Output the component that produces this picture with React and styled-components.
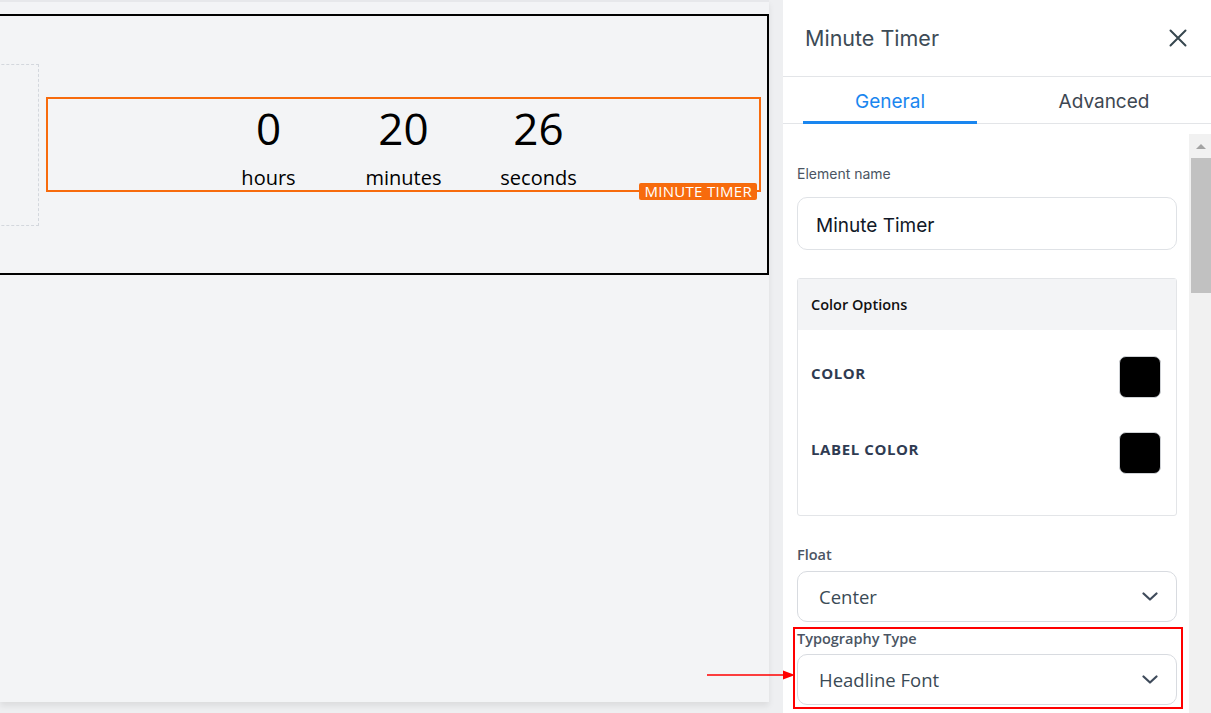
import React from "react";
import styled, { createGlobalStyle } from "styled-components";

const Global = createGlobalStyle`
  html, body { margin: 0; padding: 0; height: 100%; overflow: hidden; }
  body { font-family: "Open Sans", "Noto Sans", sans-serif; background: #eceef1; }
  #root { height: 100%; }
  * { box-sizing: border-box; }
`;

const Shell = styled.div`
  position: relative;
  display: flex;
  height: 713px;
  width: 1211px;
  box-shadow: inset 0 3px 2px -1px rgba(0, 0, 0, 0.07);
`;

const Workspace = styled.div`
  flex: 1;
  display: flex;
  padding: 0 14px 11px 0;
  background: #eeeff1;
`;

const Canvas = styled.div`
  flex: 1;
  background: #f3f4f6;
  padding-top: 14px;
  overflow: hidden;
  border-top: 2px solid #e7e8eb;
  box-shadow: 0 4px 6px rgba(0, 0, 0, 0.08);
`;

const Section = styled.div`
  margin-left: -60px;
  margin-top: -2px;
  height: 261px;
  border: 2px solid #000;
  display: flex;
  align-items: center;
  gap: 7px;
  padding-right: 6px;
`;

const Placeholder = styled.div`
  width: 97px;
  height: 162px;
  border: 1px dashed #d3d7dd;
`;

const TimerBox = styled.div`
  position: relative;
  flex: 1;
  height: 95px;
  border: 2px solid #f76b0d;
  display: flex;
  justify-content: center;
  padding-top: 3px;
`;

const Unit = styled.div`
  width: 135px;
  display: flex;
  flex-direction: column;
  align-items: center;
  color: #000;
`;

const Value = styled.div`
  font-size: 44px;
  line-height: 52px;
`;

const UnitLabel = styled.div`
  margin-top: 12px;
  font-size: 20px;
  line-height: 24px;
`;

const Badge = styled.div`
  position: absolute;
  right: 2px;
  bottom: -10px;
  height: 17px;
  padding: 0 5px;
  background: #f76b0d;
  color: #fff;
  font-size: 15px;
  letter-spacing: 0.3px;
  line-height: 17px;
  border-radius: 2px;
  white-space: nowrap;
`;

const Panel = styled.aside`
  width: 428px;
  background: #fff;
  display: flex;
  flex-direction: column;
`;

const Header = styled.div`
  height: 77px;
  border-bottom: 1px solid #e3e5e8;
  display: flex;
  align-items: center;
  justify-content: space-between;
  padding: 0 24px 0 22px;
`;

const Title = styled.h2`
  margin: 0;
  font-family: Inter, "Noto Sans", sans-serif;
  font-weight: 400;
  font-size: 21.5px;
  color: #3d4b56;
`;

const CloseButton = styled.button`
  border: 0;
  background: none;
  padding: 0;
  width: 18px;
  height: 18px;
  display: flex;
  color: #37474f;
  cursor: pointer;
`;

const Tabs = styled.div`
  display: flex;
  height: 47px;
  border-bottom: 1px solid #e3e5e8;
`;

const Tab = styled.div`
  position: relative;
  flex: 1 1 0;
  min-width: 0;
  display: flex;
  align-items: center;
  justify-content: center;
  padding-top: 2px;
  font-family: Inter, "Noto Sans", sans-serif;
  font-size: 19px;
  color: ${(p) => (p.$active ? "#1a86ef" : "#3d4752")};
  &::after {
    content: "";
    display: ${(p) => (p.$active ? "block" : "none")};
    position: absolute;
    left: 20px;
    right: 20px;
    bottom: -1px;
    height: 3px;
    background: #1a86ef;
  }
`;

const Body = styled.div`
  flex: 1;
  display: flex;
  margin-top: 10px;
  min-height: 0;
`;

const Content = styled.div`
  flex: 1;
  padding: 30px 12px 0 14px;
  overflow: hidden;
`;

const ScrollTrack = styled.div`
  width: 22px;
  background: #f1f1f1;
  display: flex;
  flex-direction: column;
`;

const ScrollArrow = styled.div`
  height: 24px;
  display: flex;
  align-items: center;
  justify-content: center;
  padding-left: 2px;
  &::before {
    content: "";
    border-left: 5px solid transparent;
    border-right: 5px solid transparent;
    border-bottom: 5px solid #a3a3a3;
  }
`;

const ScrollThumb = styled.div`
  height: 135px;
  margin-left: 2px;
  background: #c1c1c1;
`;

const FieldLabel = styled.div`
  font-family: ${(p) => (p.$plain ? 'Inter, "Noto Sans", sans-serif' : '"Open Sans", sans-serif')};
  font-size: ${(p) => (p.$plain ? "14px" : "14.5px")};
  font-weight: ${(p) => (p.$plain ? 400 : 600)};
  color: #4b5563;
  line-height: 20px;
  margin-bottom: ${(p) => p.$gap || 6}px;
`;

const TextInput = styled.div`
  height: 53px;
  border: 1px solid #dfe2e6;
  border-radius: 10px;
  display: flex;
  align-items: center;
  padding: 3px 18px 0;
  font-family: Inter, "Noto Sans", sans-serif;
  font-size: 19px;
  color: #111827;
`;

const Card = styled.div`
  margin-top: 28px;
  border: 1px solid #e3e5e8;
  border-radius: 3px;
  height: 238px;
`;

const CardHeader = styled.div`
  height: 51px;
  background: #f3f4f6;
  display: flex;
  align-items: center;
  padding: 0 13px;
  font-size: 14.5px;
  font-weight: 600;
  color: #111;
`;

const CardBody = styled.div`
  padding: 26px 15px 0 13px;
  display: flex;
  flex-direction: column;
  gap: 34px;
`;

const ColorRow = styled.div`
  display: flex;
  align-items: center;
  justify-content: space-between;
  height: 42px;
`;

const ColorName = styled.div`
  font-size: 15px;
  font-weight: 700;
  letter-spacing: 0.6px;
  color: #2f3b52;
  margin-top: -8px;
`;

const Swatch = styled.div`
  width: 42px;
  height: 42px;
  border-radius: 7px;
  border: 1px solid #cfd2d6;
  background: ${(p) => p.$color};
`;

const Field = styled.div`
  position: relative;
  margin-top: ${(p) => p.$top}px;
`;

const Select = styled.div`
  height: 51px;
  border: 1px solid #d8dbe0;
  border-radius: 10px;
  display: flex;
  align-items: center;
  justify-content: space-between;
  padding: 0 18px 0 21px;
  font-size: 18.5px;
  color: #3a4a55;
`;

const Highlight = styled.div`
  position: absolute;
  top: -2px;
  left: -4px;
  right: -6px;
  bottom: -4px;
  border: 2px solid #ff0000;
  pointer-events: none;
`;

const Arrow = styled.svg`
  position: absolute;
  left: 707px;
  top: 669px;
`;

const Chevron = () => (
  <svg width="16" height="9" viewBox="0 0 16 9" fill="none">
    <polyline points="1.5,1.5 8,7.5 14.5,1.5" stroke="#3f4b5b" strokeWidth="2.2" strokeLinecap="round" strokeLinejoin="round" />
  </svg>
);

const units = [
  { value: "0", label: "hours" },
  { value: "20", label: "minutes" },
  { value: "26", label: "seconds" },
];

export default function App() {
  return (
    <>
      <Global />
      <Shell>
        <Workspace>
          <Canvas>
            <Section>
              <Placeholder />
              <TimerBox>
                {units.map((u) => (
                  <Unit key={u.label}>
                    <Value>{u.value}</Value>
                    <UnitLabel>{u.label}</UnitLabel>
                  </Unit>
                ))}
                <Badge>MINUTE TIMER</Badge>
              </TimerBox>
            </Section>
          </Canvas>
        </Workspace>
        <Panel>
          <Header>
            <Title>Minute Timer</Title>
            <CloseButton aria-label="Close">
              <svg width="18" height="18" viewBox="0 0 18 18" fill="none">
                <path d="M1.5 1.5 16.5 16.5M16.5 1.5 1.5 16.5" stroke="currentColor" strokeWidth="2" strokeLinecap="round" />
              </svg>
            </CloseButton>
          </Header>
          <Tabs>
            <Tab $active>General</Tab>
            <Tab>Advanced</Tab>
          </Tabs>
          <Body>
            <Content>
              <FieldLabel $plain $gap={13}>Element name</FieldLabel>
              <TextInput>Minute Timer</TextInput>
              <Card>
                <CardHeader>Color Options</CardHeader>
                <CardBody>
                  <ColorRow>
                    <ColorName>COLOR</ColorName>
                    <Swatch $color="#000" />
                  </ColorRow>
                  <ColorRow>
                    <ColorName>LABEL COLOR</ColorName>
                    <Swatch $color="#000" />
                  </ColorRow>
                </CardBody>
              </Card>
              <Field $top={29}>
                <FieldLabel>Float</FieldLabel>
                <Select>
                  Center
                  <Chevron />
                </Select>
              </Field>
              <Field $top={7}>
                <FieldLabel $gap={5}>Typography Type</FieldLabel>
                <Select>
                  Headline Font
                  <Chevron />
                </Select>
                <Highlight />
              </Field>
            </Content>
            <ScrollTrack>
              <ScrollArrow />
              <ScrollThumb />
            </ScrollTrack>
          </Body>
        </Panel>
        <Arrow width="90" height="12" viewBox="0 0 90 12">
          <line x1="0" y1="6" x2="78" y2="6" stroke="#f00" strokeWidth="1.5" />
          <polygon points="76,1.5 88,6 76,10.5" fill="#f00" />
        </Arrow>
      </Shell>
    </>
  );
}
